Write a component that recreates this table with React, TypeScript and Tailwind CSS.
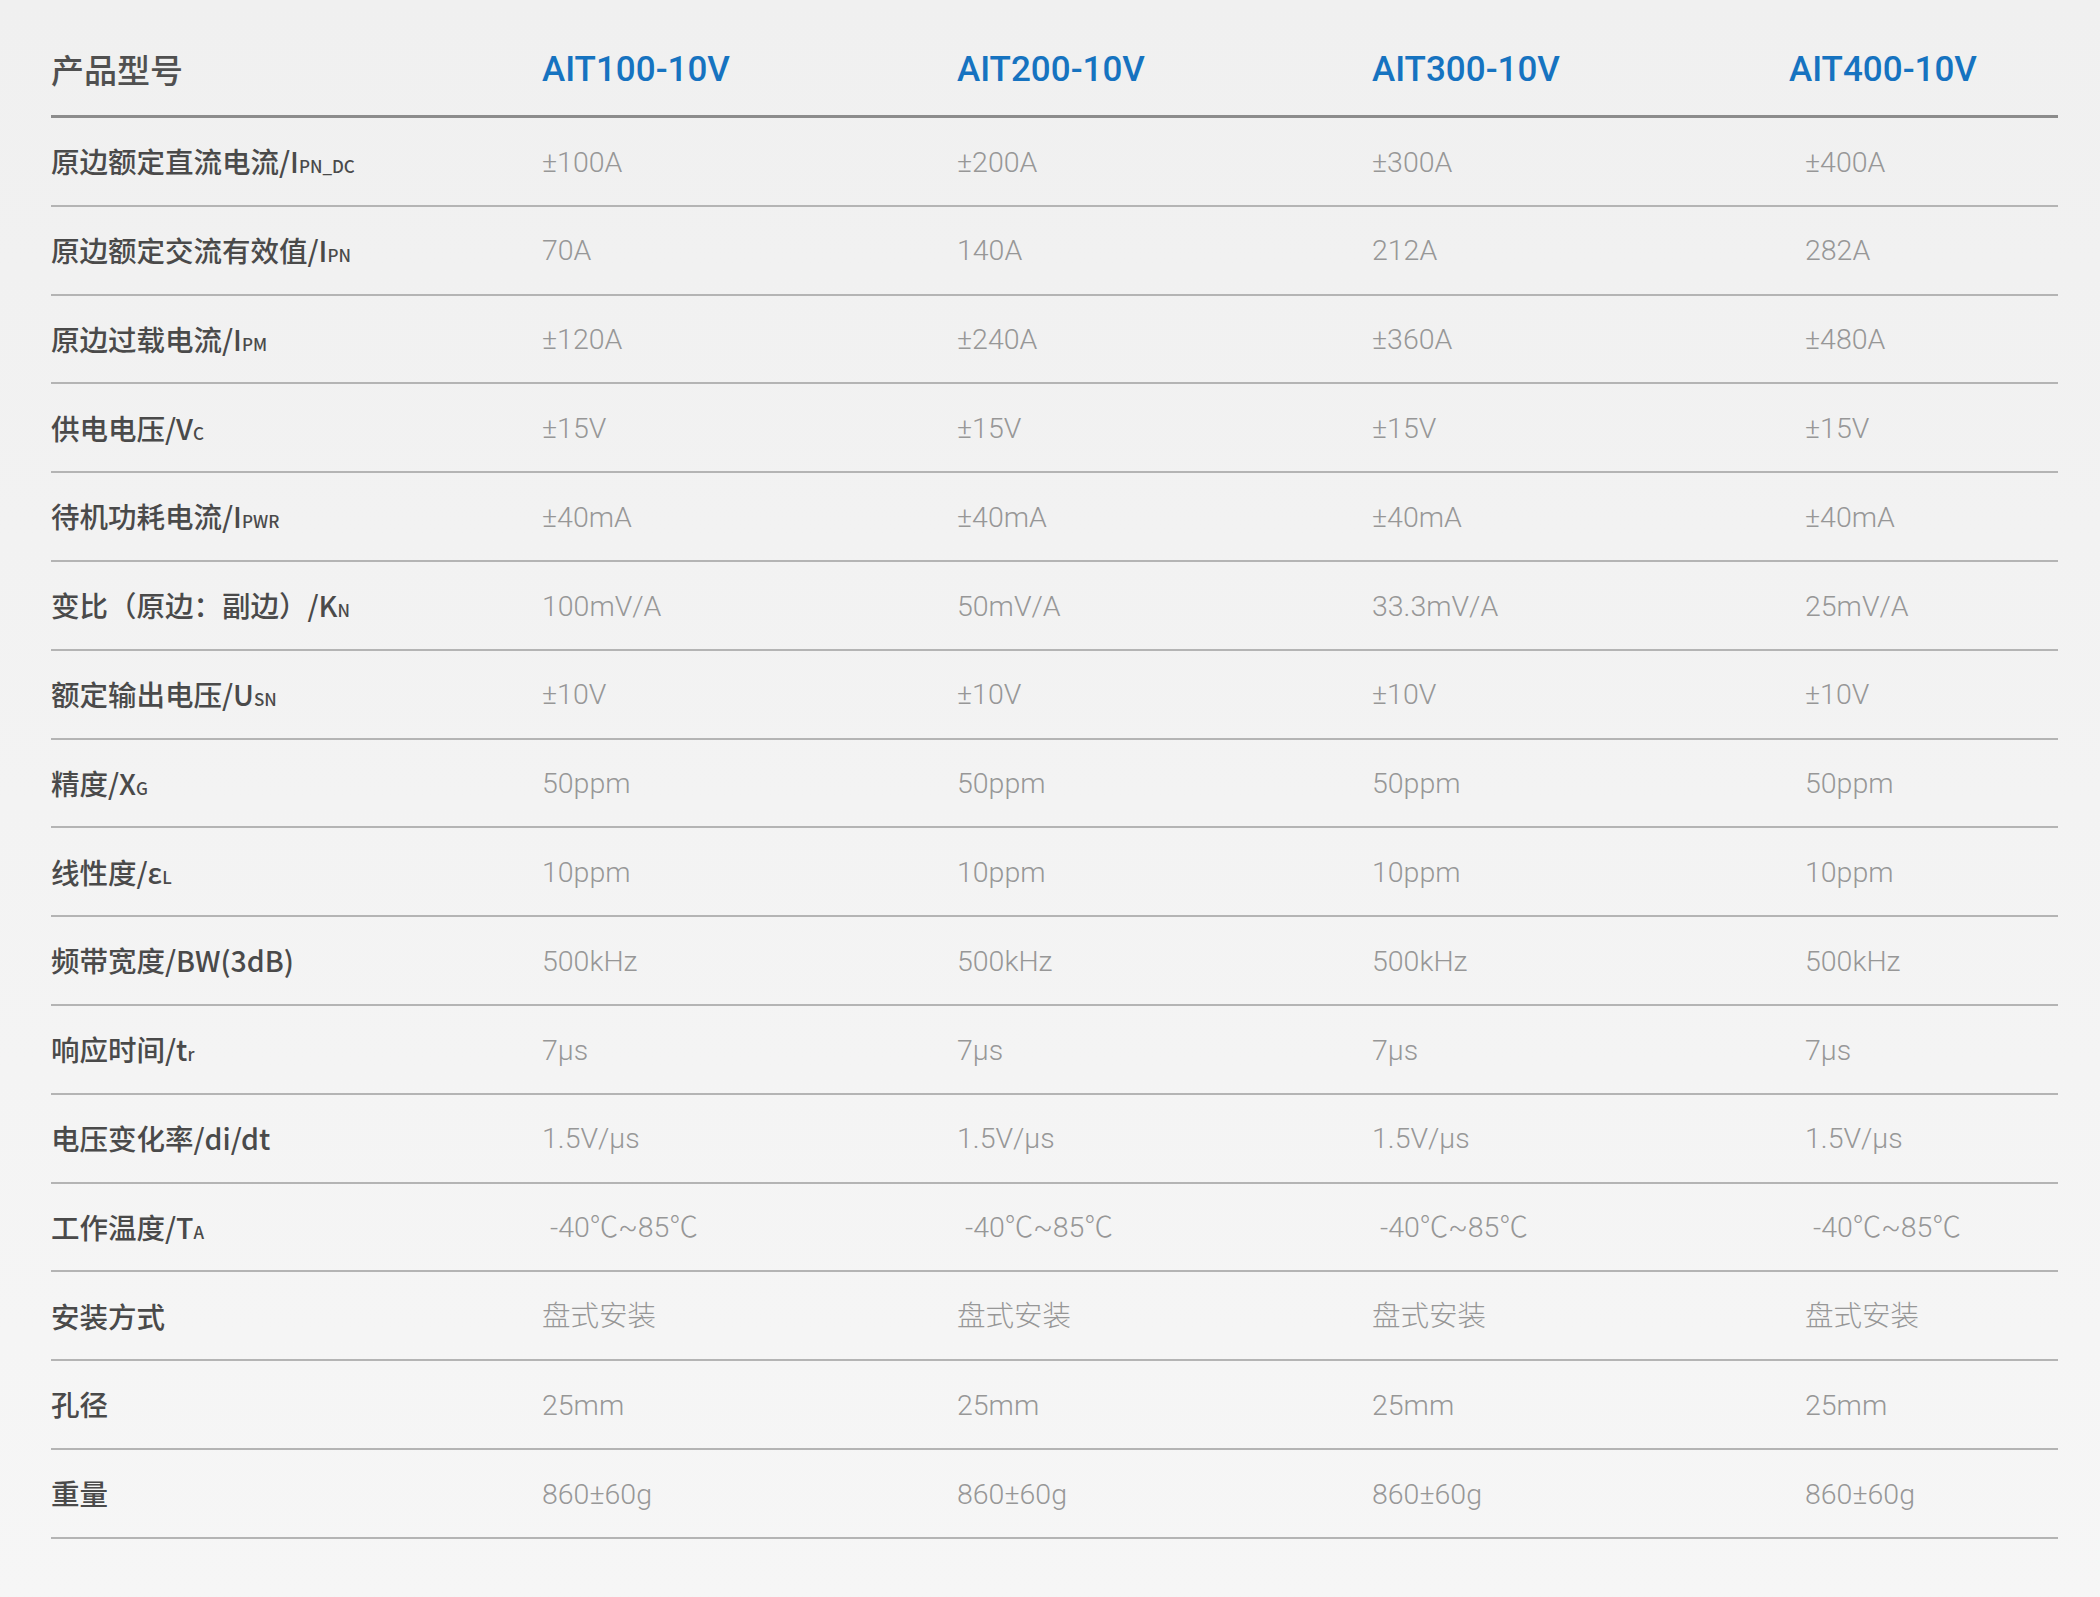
import React from "react";

type Label = { main: string; sub?: string };

const rows: { label: Label; values: string[]; indent?: boolean }[] = [
  { label: { main: "原边额定直流电流/I", sub: "PN_DC" }, values: ["±100A", "±200A", "±300A", "±400A"] },
  { label: { main: "原边额定交流有效值/I", sub: "PN" }, values: ["70A", "140A", "212A", "282A"] },
  { label: { main: "原边过载电流/I", sub: "PM" }, values: ["±120A", "±240A", "±360A", "±480A"] },
  { label: { main: "供电电压/V", sub: "C" }, values: ["±15V", "±15V", "±15V", "±15V"] },
  { label: { main: "待机功耗电流/I", sub: "PWR" }, values: ["±40mA", "±40mA", "±40mA", "±40mA"] },
  { label: { main: "变比（原边：副边）/K", sub: "N" }, values: ["100mV/A", "50mV/A", "33.3mV/A", "25mV/A"] },
  { label: { main: "额定输出电压/U", sub: "SN" }, values: ["±10V", "±10V", "±10V", "±10V"] },
  { label: { main: "精度/X", sub: "G" }, values: ["50ppm", "50ppm", "50ppm", "50ppm"] },
  { label: { main: "线性度/ε", sub: "L" }, values: ["10ppm", "10ppm", "10ppm", "10ppm"] },
  { label: { main: "频带宽度/BW(3dB)" }, values: ["500kHz", "500kHz", "500kHz", "500kHz"] },
  { label: { main: "响应时间/t", sub: "r" }, values: ["7μs", "7μs", "7μs", "7μs"] },
  { label: { main: "电压变化率/di/dt" }, values: ["1.5V/μs", "1.5V/μs", "1.5V/μs", "1.5V/μs"] },
  { label: { main: "工作温度/T", sub: "A" }, values: ["-40℃~85℃", "-40℃~85℃", "-40℃~85℃", "-40℃~85℃"], indent: true },
  { label: { main: "安装方式" }, values: ["盘式安装", "盘式安装", "盘式安装", "盘式安装"] },
  { label: { main: "孔径" }, values: ["25mm", "25mm", "25mm", "25mm"] },
  { label: { main: "重量" }, values: ["860±60g", "860±60g", "860±60g", "860±60g"] },
];

const models = ["AIT100-10V", "AIT200-10V", "AIT300-10V", "AIT400-10V"];

const labelFont = { fontFamily: '"Noto Sans CJK SC", "Noto Sans", sans-serif' };

export default function App() {
  return (
    <div className="min-h-[1597px] w-[2100px] bg-gradient-to-b from-[#f0f0f0] to-[#f6f6f6]">
      <div className="ml-[51px] w-[2007px]">
        {/* header */}
        <div className="grid h-[118px] grid-cols-[491px_415px_415px_415px_1fr] items-center border-b-[3px] border-[#8c8c8c] pt-[24px]">
          <div
            className="text-[33px] font-medium leading-none text-[#505050]"
            style={labelFont}
          >
            产品型号
          </div>
          {models.map((m, i) => (
            <div
              key={m}
              className={
                "text-[35px] font-medium leading-none text-[#1673c0] " + (i === 3 ? "pl-[2px]" : "")
              }
              style={{ fontFamily: 'Roboto, "Liberation Sans", sans-serif' }}
            >
              {m}
            </div>
          ))}
        </div>
        {rows.map((r, ri) => (
          <div
            key={ri}
            className="grid h-[88.8px] grid-cols-[491px_415px_415px_415px_1fr] items-center border-b-2 border-[#b4b4b4]"
          >
            <div
              className="whitespace-nowrap text-[28.5px] font-medium leading-none text-[#4a4a4a]"
              style={labelFont}
            >
              {r.label.main}
              {r.label.sub && <span className="text-[17px]">{r.label.sub}</span>}
            </div>
            {r.values.map((v, i) => (
              <div
                key={i}
                className={
                  "whitespace-nowrap pt-[3px] text-[28.5px] font-light leading-none text-[#979797] " +
                  (i === 3 ? (r.indent ? "pl-[26px]" : "pl-[18px]") : r.indent ? "pl-[8px]" : "")
                }
                style={{ fontFamily: 'Roboto, "Noto Sans CJK SC", sans-serif' }}
              >
                {v}
              </div>
            ))}
          </div>
        ))}
      </div>
    </div>
  );
}
